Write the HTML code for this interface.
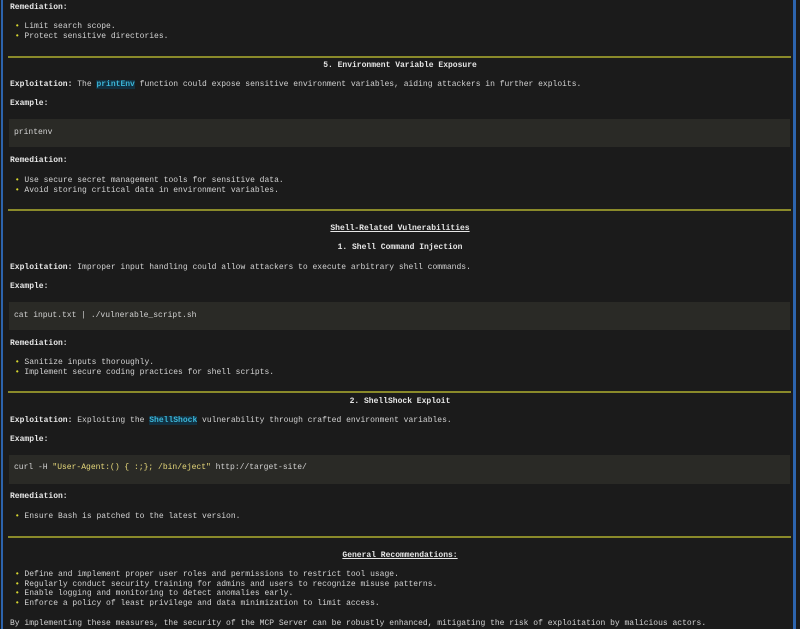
<!DOCTYPE html>
<html><head><style>
html,body{margin:0;padding:0;background:#1b1b1b;width:800px;height:629px;overflow:hidden}
body{font-family:"Liberation Mono","DejaVu Sans Mono",monospace;font-size:8px;color:#d2d2d2;position:relative}
.frame{position:absolute;left:1px;top:0;width:795px;height:629px;border-left:2px solid #2d64ad;border-right:3px solid #2d64ad;box-sizing:border-box}
.t{position:absolute;left:10px;white-space:pre;line-height:10px}
.c{position:absolute;left:0;width:800px;text-align:center;white-space:pre;line-height:10px;font-weight:bold;color:#e6e6e6}
b{color:#e8e8e8}
.r{position:absolute;left:8px;width:783px;height:2px;background:#8a8a2a}
.code{position:absolute;left:9px;width:781px;background:#2a2a26}
.dot{color:#d8d830}
.hl{color:#3bb6d8;background:#123040;font-weight:bold}
u{text-decoration:underline}
.y{color:#e6d87a}
</style></head><body>
<div class="frame"></div>
<div class="t" style="top:3px"><b>Remediation:</b></div>
<div class="t" style="top:22px"> <span class="dot">•</span> Limit search scope.</div>
<div class="t" style="top:32px"> <span class="dot">•</span> Protect sensitive directories.</div>
<div class="r" style="top:56px"></div>
<div class="c" style="top:61px">5. Environment Variable Exposure</div>
<div class="t" style="top:80px"><b>Exploitation:</b> The <span class="hl">printEnv</span> function could expose sensitive environment variables, aiding attackers in further exploits.</div>
<div class="t" style="top:99px"><b>Example:</b></div>
<div class="code" style="top:119px;height:28px"></div>
<div class="t" style="top:128px;left:14px">printenv</div>
<div class="t" style="top:156px"><b>Remediation:</b></div>
<div class="t" style="top:176px"> <span class="dot">•</span> Use secure secret management tools for sensitive data.</div>
<div class="t" style="top:186px"> <span class="dot">•</span> Avoid storing critical data in environment variables.</div>
<div class="r" style="top:209px"></div>
<div class="c" style="top:224px"><u>Shell-Related Vulnerabilities</u></div>
<div class="c" style="top:243px">1. Shell Command Injection</div>
<div class="t" style="top:263px"><b>Exploitation:</b> Improper input handling could allow attackers to execute arbitrary shell commands.</div>
<div class="t" style="top:282px"><b>Example:</b></div>
<div class="code" style="top:302px;height:28px"></div>
<div class="t" style="top:311px;left:14px">cat input.txt | ./vulnerable_script.sh</div>
<div class="t" style="top:339px"><b>Remediation:</b></div>
<div class="t" style="top:358px"> <span class="dot">•</span> Sanitize inputs thoroughly.</div>
<div class="t" style="top:368px"> <span class="dot">•</span> Implement secure coding practices for shell scripts.</div>
<div class="r" style="top:391px"></div>
<div class="c" style="top:397px">2. ShellShock Exploit</div>
<div class="t" style="top:416px"><b>Exploitation:</b> Exploiting the <span class="hl">ShellShock</span> vulnerability through crafted environment variables.</div>
<div class="t" style="top:435px"><b>Example:</b></div>
<div class="code" style="top:455px;height:29px"></div>
<div class="t" style="top:463px;left:14px">curl -H <span class="y">"User-Agent:() { :;}; /bin/eject"</span> http://target-site/</div>
<div class="t" style="top:492px"><b>Remediation:</b></div>
<div class="t" style="top:512px"> <span class="dot">•</span> Ensure Bash is patched to the latest version.</div>
<div class="r" style="top:536px"></div>
<div class="c" style="top:551px"><u>General Recommendations:</u></div>
<div class="t" style="top:570px"> <span class="dot">•</span> Define and implement proper user roles and permissions to restrict tool usage.</div>
<div class="t" style="top:580px"> <span class="dot">•</span> Regularly conduct security training for admins and users to recognize misuse patterns.</div>
<div class="t" style="top:589px"> <span class="dot">•</span> Enable logging and monitoring to detect anomalies early.</div>
<div class="t" style="top:599px"> <span class="dot">•</span> Enforce a policy of least privilege and data minimization to limit access.</div>
<div class="t" style="top:619px">By implementing these measures, the security of the MCP Server can be robustly enhanced, mitigating the risk of exploitation by malicious actors.</div>
</body></html>
